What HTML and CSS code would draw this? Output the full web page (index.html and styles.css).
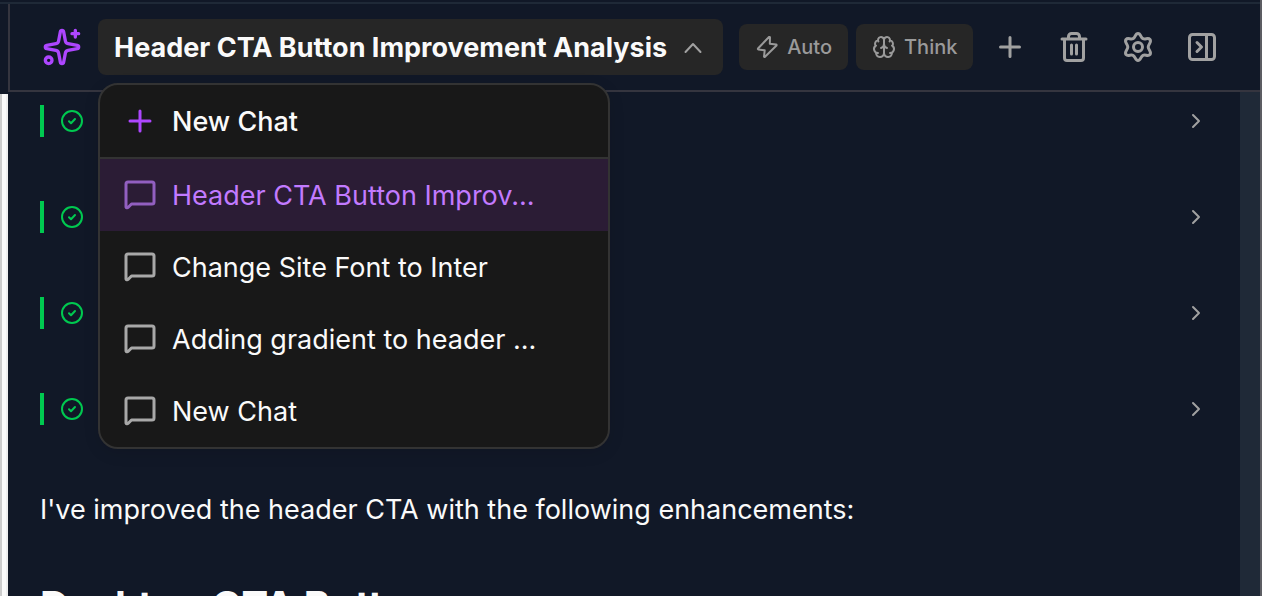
FILE: index.html
```html
<!DOCTYPE html>
<html lang="en">
<head>
<meta charset="utf-8">
<title>Chat</title>
<link rel="stylesheet" href="styles.css">
</head>
<body>
<svg class="defs" aria-hidden="true">
  <symbol id="check" viewBox="0 0 24 24"><circle cx="12" cy="12" r="10"/><path d="m9 12.300 2 2 4-4.300"/></symbol>
  <symbol id="right" viewBox="0 0 24 24"><path d="m9 6 6 6-6 6"/></symbol>
  <symbol id="bubble" viewBox="0 0 32 32"><path d="M2 28V5a2 2 0 0 1 2-2h24a2 2 0 0 1 2 2v18a2 2 0 0 1-2 2H7.500L4 28.500a1.200 1.200 0 0 1-2-.5Z"/></symbol>
  <symbol id="plus" viewBox="0 0 24 24"><path d="M12 2v20M2 12h20"/></symbol>
</svg>
<div class="app">
  <aside class="rail"><div class="page-edge"></div></aside>
  <main class="panel">
    <header class="header">
      <svg class="logo" viewBox="0 0 24 24"><path d="M11.017 2.814a1 1 0 0 1 1.966 0l1.051 5.558a2 2 0 0 0 1.594 1.594l5.558 1.051a1 1 0 0 1 0 1.966l-5.558 1.051a2 2 0 0 0-1.594 1.594l-1.051 5.558a1 1 0 0 1-1.966 0l-1.051-5.558a2 2 0 0 0-1.594-1.594l-5.558-1.051a1 1 0 0 1 0-1.966l5.558-1.051a2 2 0 0 0 1.594-1.594z"/><path d="M20 2v4M22 4h-4"/><circle cx="4" cy="20" r="2"/></svg>
      <div class="switcher">
        <button class="title" aria-expanded="true">Header CTA Button Improvement Analysis
          <svg class="chevron" viewBox="0 0 20 20"><path d="m2.500 14 7.500-8 7.500 8"/></svg>
        </button>
        <nav class="menu">
          <button class="item new"><svg class="ic"><use href="#plus"/></svg><span>New Chat</span></button>
          <button class="item active"><svg class="bubble"><use href="#bubble"/></svg><span>Header CTA Button Improv...</span></button>
          <button class="item"><svg class="bubble"><use href="#bubble"/></svg><span>Change Site Font to Inter</span></button>
          <button class="item"><svg class="bubble"><use href="#bubble"/></svg><span>Adding gradient to header ...</span></button>
          <button class="item"><svg class="bubble"><use href="#bubble"/></svg><span>New Chat</span></button>
        </nav>
      </div>
      <div class="modes">
        <button class="mode"><svg viewBox="0 0 24 24"><path d="M14 2 3 13.500q-.4.800.4 1l6.300.800L9 21.500q.2.800 1 .3L21.500 10.500q.4-.8-.4-1l-6.300-.8L15 2.500q-.2-.8-1-.5Z"/></svg>Auto</button>
        <button class="mode"><svg viewBox="0 0 24 24"><path d="M12 18V5M15 13a4.170 4.170 0 0 1-3-4 4.170 4.170 0 0 1-3 4M17.598 6.500A3 3 0 1 0 12 5a3 3 0 1 0-5.598 1.500M17.997 5.125a4 4 0 0 1 2.526 5.770M18 18a4 4 0 0 0 2-7.464M19.967 17.483A4 4 0 1 1 12 18a4 4 0 1 1-7.967-.517M6 18a4 4 0 0 1-2-7.464M6.003 5.125a4 4 0 0 0-2.526 5.770"/></svg>Think</button>
      </div>
      <div class="tools">
        <button aria-label="New chat"><svg viewBox="0 0 32 32"><path d="M16 6.500v19M6.500 16h19"/></svg></button>
        <button aria-label="Delete"><svg viewBox="0 0 32 32"><path d="M4 8h24M6.500 8v19a2.500 2.500 0 0 0 2.500 2.500h14a2.500 2.500 0 0 0 2.500-2.500V8M10.500 8V5.500a3 3 0 0 1 3-3h5a3 3 0 0 1 3 3V8M13.500 14v9M18.500 14v9"/></svg></button>
        <button aria-label="Settings"><svg viewBox="0 0 32 32"><path d="M16 2.500c3 0 2.500 4 5 5.200 2.500 1.200 5-1.600 7 .8 2 2.700-1.800 4.500-1.800 7.500s3.800 4.800 1.800 7.500c-2 2.400-4.500-.4-7 .8s-2 5.200-5 5.200-2.500-4-5-5.200-5 1.600-7-.8c-2-2.700 1.800-4.500 1.800-7.500S2 11.200 4 8.500c2-2.400 4.500.4 7-.8s2-5.200 5-5.200Z"/><circle cx="16" cy="16" r="4.500"/></svg></button>
        <button aria-label="Collapse panel"><svg viewBox="0 0 32 32"><rect x="3.500" y="3.500" width="25" height="25" rx="3"/><path d="M20.500 3.500v25M11 11.500l4.500 4.500-4.500 4.500"/></svg></button>
      </div>
    </header>
    <div class="body">
      <section class="content">
        <div class="steps">
          <button class="step" aria-label="Completed step"><svg class="ic"><use href="#check"/></svg><svg class="ic more"><use href="#right"/></svg></button>
          <button class="step" aria-label="Completed step"><svg class="ic"><use href="#check"/></svg><svg class="ic more"><use href="#right"/></svg></button>
          <button class="step" aria-label="Completed step"><svg class="ic"><use href="#check"/></svg><svg class="ic more"><use href="#right"/></svg></button>
          <button class="step" aria-label="Completed step"><svg class="ic"><use href="#check"/></svg><svg class="ic more"><use href="#right"/></svg></button>
        </div>
        <p>I've improved the header CTA with the following enhancements:</p>
        <h2>Desktop CTA Button</h2>
      </section>
      <div class="scroll"></div>
    </div>
  </main>
</div>
</body>
</html>
```
FILE: styles.css
```css
* { box-sizing: border-box; }
body { margin: 0; background: #111827; color: #fafafa; font: 400 27px/36px Inter, "Liberation Sans", sans-serif; }
button { border: 0; padding: 0; background: none; color: inherit; font: inherit; cursor: pointer; }
svg { display: block; flex: none; fill: none; stroke: currentColor; stroke-width: 2; stroke-linecap: round; stroke-linejoin: round; }
.defs { position: absolute; width: 0; height: 0; }
.app { display: flex; height: 100vh; overflow: hidden; padding-top: 2px; border-right: 2px solid #5c5d63; }
.rail { width: 8px; padding-top: 90px; border-top: 2px solid #1f2937; display: flex; }
.page-edge { flex: 1; background: #fafafa; border-left: 2px solid #cccccc; border-right: 2px solid #eeeeee; }
.panel { flex: 1; min-width: 0; display: flex; flex-direction: column; border-top: 2px solid #1f2937; }
.header { display: flex; align-items: center; height: 88px; flex: none; padding: 0 30px 0 32px; border-left: 2px solid #35353f; border-bottom: 2px solid #35353f; }
.logo { width: 40px; height: 40px; color: #ad46ff; margin-right: 16px; }
.switcher { position: relative; }
.title { display: flex; align-items: center; justify-content: space-between; gap: 16px; height: 56px; padding: 2px 20px 0 16px; border-radius: 8px; background: #262626; font-size: 27px; font-weight: 700; white-space: nowrap; }
.chevron { width: 20px; height: 20px; color: #a1a1a1; }
.menu { position: absolute; z-index: 2; top: 64px; left: 0; width: 512px; border: 2px solid #333333; border-radius: 20px; background: #181818; overflow: hidden; box-shadow: 0 4px 16px rgba(0, 0, 0, .1); }
.item { display: flex; align-items: center; gap: 16px; width: 100%; height: 72px; padding: 0 24px; text-align: left; white-space: nowrap; }
.item span { padding-top: 2px; }
.bubble { width: 32px; height: 32px; color: #a8a8a8; stroke-width: 3; }
.new { height: 74px; border-bottom: 2px solid #333333; font-weight: 500; }
.new .ic { color: #ad46ff; margin: 0 4px; stroke-width: 3; }
.active { background: #2b1c35; color: #c27aff; }
.active .bubble { color: #925fc0; }
.ic { width: 24px; height: 24px; }
.modes { display: flex; gap: 8px; margin-left: 16px; }
.mode { display: flex; align-items: center; gap: 8px; height: 46px; padding: 0 16px; border-radius: 8px; background: #262626; color: #9a9a9a; font-size: 20px; font-weight: 500; }
.mode svg { width: 24px; height: 24px; }
.tools { display: flex; flex: 1; justify-content: flex-end; gap: 8px; color: #a1a1a1; }
.tools button { display: grid; place-items: center; width: 56px; height: 56px; }
.tools svg { width: 32px; height: 32px; stroke-width: 3; }
.body { display: flex; flex: 1; min-height: 0; }
.content { flex: 1; min-width: 0; padding: 13px 32px 0; }
.steps { display: grid; gap: 64px; }
.step { display: flex; align-items: center; justify-content: space-between; height: 32px; padding: 0 0 0 16px; border-left: 4px solid #00c950; color: #00c950; }
.step .more { color: #a1a1a1; }
p { margin: 67px 0 0; }
h2 { margin: 54px 0 0; font-size: 40px; line-height: 48px; font-weight: 700; }
.scroll { width: 20px; background: #1f2937; }
```
